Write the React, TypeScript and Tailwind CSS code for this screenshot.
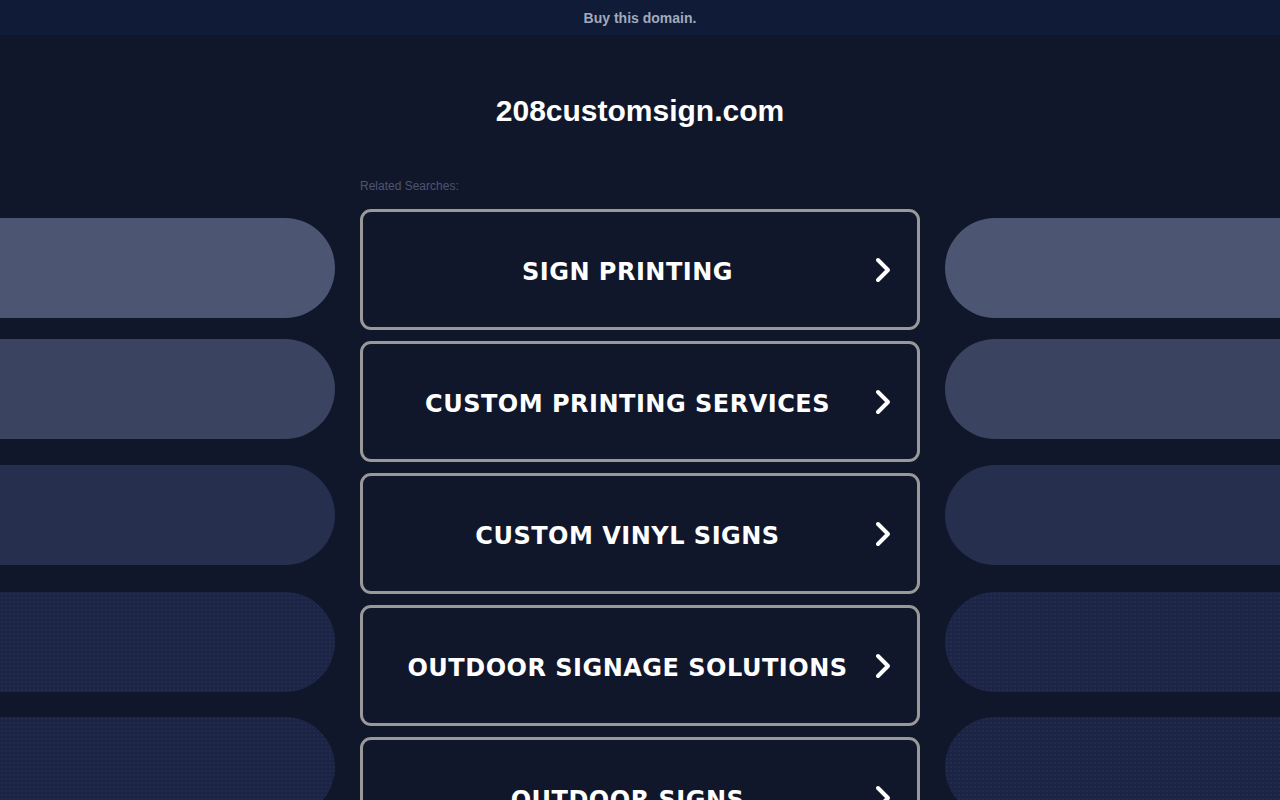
const searches = [
  'SIGN PRINTING',
  'CUSTOM PRINTING SERVICES',
  'CUSTOM VINYL SIGNS',
  'OUTDOOR SIGNAGE SOLUTIONS',
  'OUTDOOR SIGNS',
];

const dots =
  'bg-[radial-gradient(circle,rgba(120,140,190,0.07)_0.8px,transparent_1px)] bg-[length:4px_4px]';

const pills = [
  { bg: 'bg-[#4c5572]', mt: 'mt-0', dotted: false },
  { bg: 'bg-[#3a4360]', mt: 'mt-[21px]', dotted: false },
  { bg: 'bg-[#262f4e]', mt: 'mt-[26px]', dotted: false },
  { bg: 'bg-[#1c2546]', mt: 'mt-[27px]', dotted: true },
  { bg: 'bg-[#1b2444]', mt: 'mt-[25px]', dotted: true },
];

function SidePills({ side }: { side: 'left' | 'right' }) {
  return (
    <div className="w-[335px] shrink-0 pt-[40px] flex flex-col">
      {pills.map((p, i) => (
        <div
          key={i}
          className={`h-[100px] ${p.bg} ${p.mt} ${p.dotted ? dots : ''} ${
            side === 'left' ? 'rounded-r-[50px]' : 'rounded-l-[50px]'
          }`}
        />
      ))}
    </div>
  );
}

function SearchCard({ label }: { label: string }) {
  return (
    <a
      href="#"
      className="relative flex items-center h-[121px] mb-[11px] rounded-[11px] border-[3px] border-[#999999] bg-[#11172b]"
    >
      <span className="flex-1 text-center pr-[25px] pt-[4px] text-white text-[24px] font-bold tracking-[0.5px] font-['DejaVu_Sans',Verdana,sans-serif]">
        {label}
      </span>
      <svg
        className="absolute right-[26px] top-1/2 -translate-y-1/2"
        width="16"
        height="26"
        viewBox="0 0 16 26"
        fill="none"
      >
        <path d="M3 3 L13 13 L3 23" stroke="white" strokeWidth="4" strokeLinecap="round" strokeLinejoin="round" />
      </svg>
    </a>
  );
}

export default function App() {
  return (
    <div className="min-h-screen bg-[#11172b] font-['Liberation_Sans',Arial,sans-serif] overflow-hidden">
      {/* top banner */}
      <div className="h-[35px] bg-[#0f1b37] flex items-center justify-center pt-[2px]">
        <a href="#" className="text-[14px] font-bold text-[#a2aabb]">
          Buy this domain.
        </a>
      </div>

      <h1 className="mt-[58px] text-center text-[30px] leading-[36px] font-bold text-white">
        208customsign.com
      </h1>

      <div className="mt-[49px] flex gap-[25px]">
        <SidePills side="left" />

        <div className="w-[560px] shrink-0">
          <p className="pt-[1px] text-[12px] leading-[14px] text-[#4d5570]">Related Searches:</p>
          <div className="mt-[16px]">
            {searches.map((s) => (
              <SearchCard key={s} label={s} />
            ))}
          </div>
        </div>

        <SidePills side="right" />
      </div>
    </div>
  );
}
